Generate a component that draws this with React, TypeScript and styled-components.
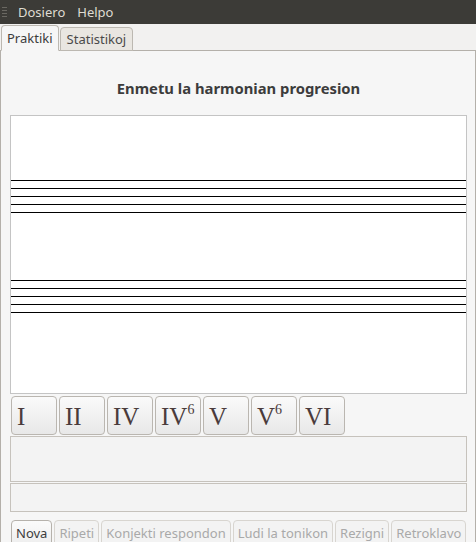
import React from "react";
import styled, { createGlobalStyle } from "styled-components";

const Global = createGlobalStyle`
  html, body { margin: 0; padding: 0; background: #f2f1f0; }
  body { font-family: "Noto Sans", "DejaVu Sans", sans-serif; font-size: 13px; color: #3c3c3c; }
  * { box-sizing: border-box; }
`;

const Window = styled.div`
  width: 476px;
  height: 542px;
  display: flex;
  flex-direction: column;
  overflow: hidden;
  background: #f2f1f0;
  & > * { flex-shrink: 0; }
`;

const MenuBar = styled.div`
  height: 24px;
  background: #3c3b37;
  display: flex;
  align-items: center;
  color: #dfdbd2;
  font-size: 13px;
`;

const Grip = styled.div`
  width: 5px;
  height: 10px;
  margin: 0 6px 0 2px;
  background: repeating-linear-gradient(to bottom, #6a6862 0 1px, transparent 1px 3px);
`;

const MenuItem = styled.span`
  padding: 0 6px;
  &:first-of-type { margin-left: -1px; }
`;

const TabBar = styled.div`
  height: 27px;
  display: flex;
  align-items: flex-end;
  padding-left: 1px;
  gap: 1px;
  margin-bottom: -1px;
  position: relative;
  z-index: 1;
`;

const Tab = styled.div<{ $active?: boolean }>`
  height: ${(p) => (p.$active ? "26px" : "24px")};
  padding: 0 ${(p) => (p.$active ? "5px" : "6px")};
  display: flex;
  align-items: center;
  border: 1px solid #bcb8b1;
  border-bottom: ${(p) => (p.$active ? "1px solid #f6f6f6" : "1px solid #bcb8b1")};
  border-radius: 4px 4px 0 0;
  background: ${(p) => (p.$active ? "#f6f6f6" : "#e9e6e1")};
  color: ${(p) => (p.$active ? "#3c3c3c" : "#4a4a4a")};
  font-size: 13px;
`;

const Panel = styled.div`
  flex: 1 1 auto;
  overflow: hidden;
  border: 1px solid #b4b0aa;
  border-bottom: none;
  background: #f6f6f6;
  padding: 0 8px 0 9px;
  display: flex;
  flex-direction: column;
  & > * { flex-shrink: 0; }
`;

const Title = styled.div`
  height: 64px;
  display: flex;
  align-items: center;
  justify-content: center;
  padding-top: 9px;
  font-weight: bold;
  font-size: 14.8px;
  color: #3c3c3c;
`;

const Staff = styled.div`
  height: 279px;
  background: #ffffff;
  border: 1px solid #c4c4c4;
  display: flex;
  flex-direction: column;
  padding-top: 64px;
`;

const StaffLines = styled.div<{ $gap: number }>`
  display: flex;
  flex-direction: column;
  gap: 7px;
  margin-bottom: ${(p) => p.$gap}px;
`;

const Line = styled.div`
  height: 1px;
  background: #000;
`;

const ChordRow = styled.div`
  display: flex;
  gap: 2px;
  padding: 2px 0 0 1px;
`;

const ChordButton = styled.div`
  width: 46px;
  height: 39px;
  border: 1px solid #bab6b0;
  border-radius: 4px;
  background: linear-gradient(to bottom, #fafafa, #e8e8e8);
  font-family: "Liberation Serif", "Times New Roman", serif;
  font-size: 25px;
  color: #4a3b3b;
  display: flex;
  align-items: center;
  padding-left: 5px;
  padding-top: 2px;
  line-height: 1;
`;

const Sup = styled.sup`
  font-size: 14px;
  vertical-align: 0;
  position: relative;
  top: -7px;
  margin-left: 0;
`;

const InfoBox = styled.div<{ $h: number }>`
  height: ${(p) => p.$h}px;
  border: 1px solid #c6c2bc;
  background: #f3f3f3;
  margin-top: 1px;
`;

const ActionRow = styled.div`
  display: flex;
  gap: 2px;
  margin-top: 8px;
  padding-left: 1px;
`;

const ActionButton = styled.div<{ $disabled?: boolean }>`
  height: 28px;
  padding: 0 4px;
  display: flex;
  align-items: flex-start;
  padding-top: 3px;
  border: 1px solid ${(p) => (p.$disabled ? "#d8d5d0" : "#b6b2ac")};
  border-radius: 4px;
  background: ${(p) => (p.$disabled ? "#f3f3f3" : "linear-gradient(to bottom, #fbfbfb, #ececec)")};
  color: ${(p) => (p.$disabled ? "#a9a9a9" : "#3c3c3c")};
  font-size: 13px;
  white-space: nowrap;
`;

const chords: { base: string; sup?: string }[] = [
  { base: "I" },
  { base: "II" },
  { base: "IV" },
  { base: "IV", sup: "6" },
  { base: "V" },
  { base: "V", sup: "6" },
  { base: "VI" },
];

const actions = [
  { label: "Nova", disabled: false },
  { label: "Ripeti", disabled: true },
  { label: "Konjekti respondon", disabled: true },
  { label: "Ludi la tonikon", disabled: true },
  { label: "Rezigni", disabled: true },
  { label: "Retroklavo", disabled: true },
];

export default function App() {
  return (
    <>
      <Global />
      <Window>
        <MenuBar>
          <Grip />
          <MenuItem>Dosiero</MenuItem>
          <MenuItem>Helpo</MenuItem>
        </MenuBar>
        <TabBar>
          <Tab $active>Praktiki</Tab>
          <Tab>Statistikoj</Tab>
        </TabBar>
        <Panel>
          <Title>Enmetu la harmonian progresion</Title>
          <Staff>
            <StaffLines $gap={67}>
              {[0, 1, 2, 3, 4].map((i) => (
                <Line key={i} />
              ))}
            </StaffLines>
            <StaffLines $gap={0}>
              {[0, 1, 2, 3, 4].map((i) => (
                <Line key={i} />
              ))}
            </StaffLines>
          </Staff>
          <ChordRow>
            {chords.map((c, i) => (
              <ChordButton key={i}>
                {c.base}
                {c.sup && <Sup>{c.sup}</Sup>}
              </ChordButton>
            ))}
          </ChordRow>
          <InfoBox $h={46} />
          <InfoBox $h={29} />
          <ActionRow>
            {actions.map((a) => (
              <ActionButton key={a.label} $disabled={a.disabled}>
                {a.label}
              </ActionButton>
            ))}
          </ActionRow>
        </Panel>
      </Window>
    </>
  );
}
